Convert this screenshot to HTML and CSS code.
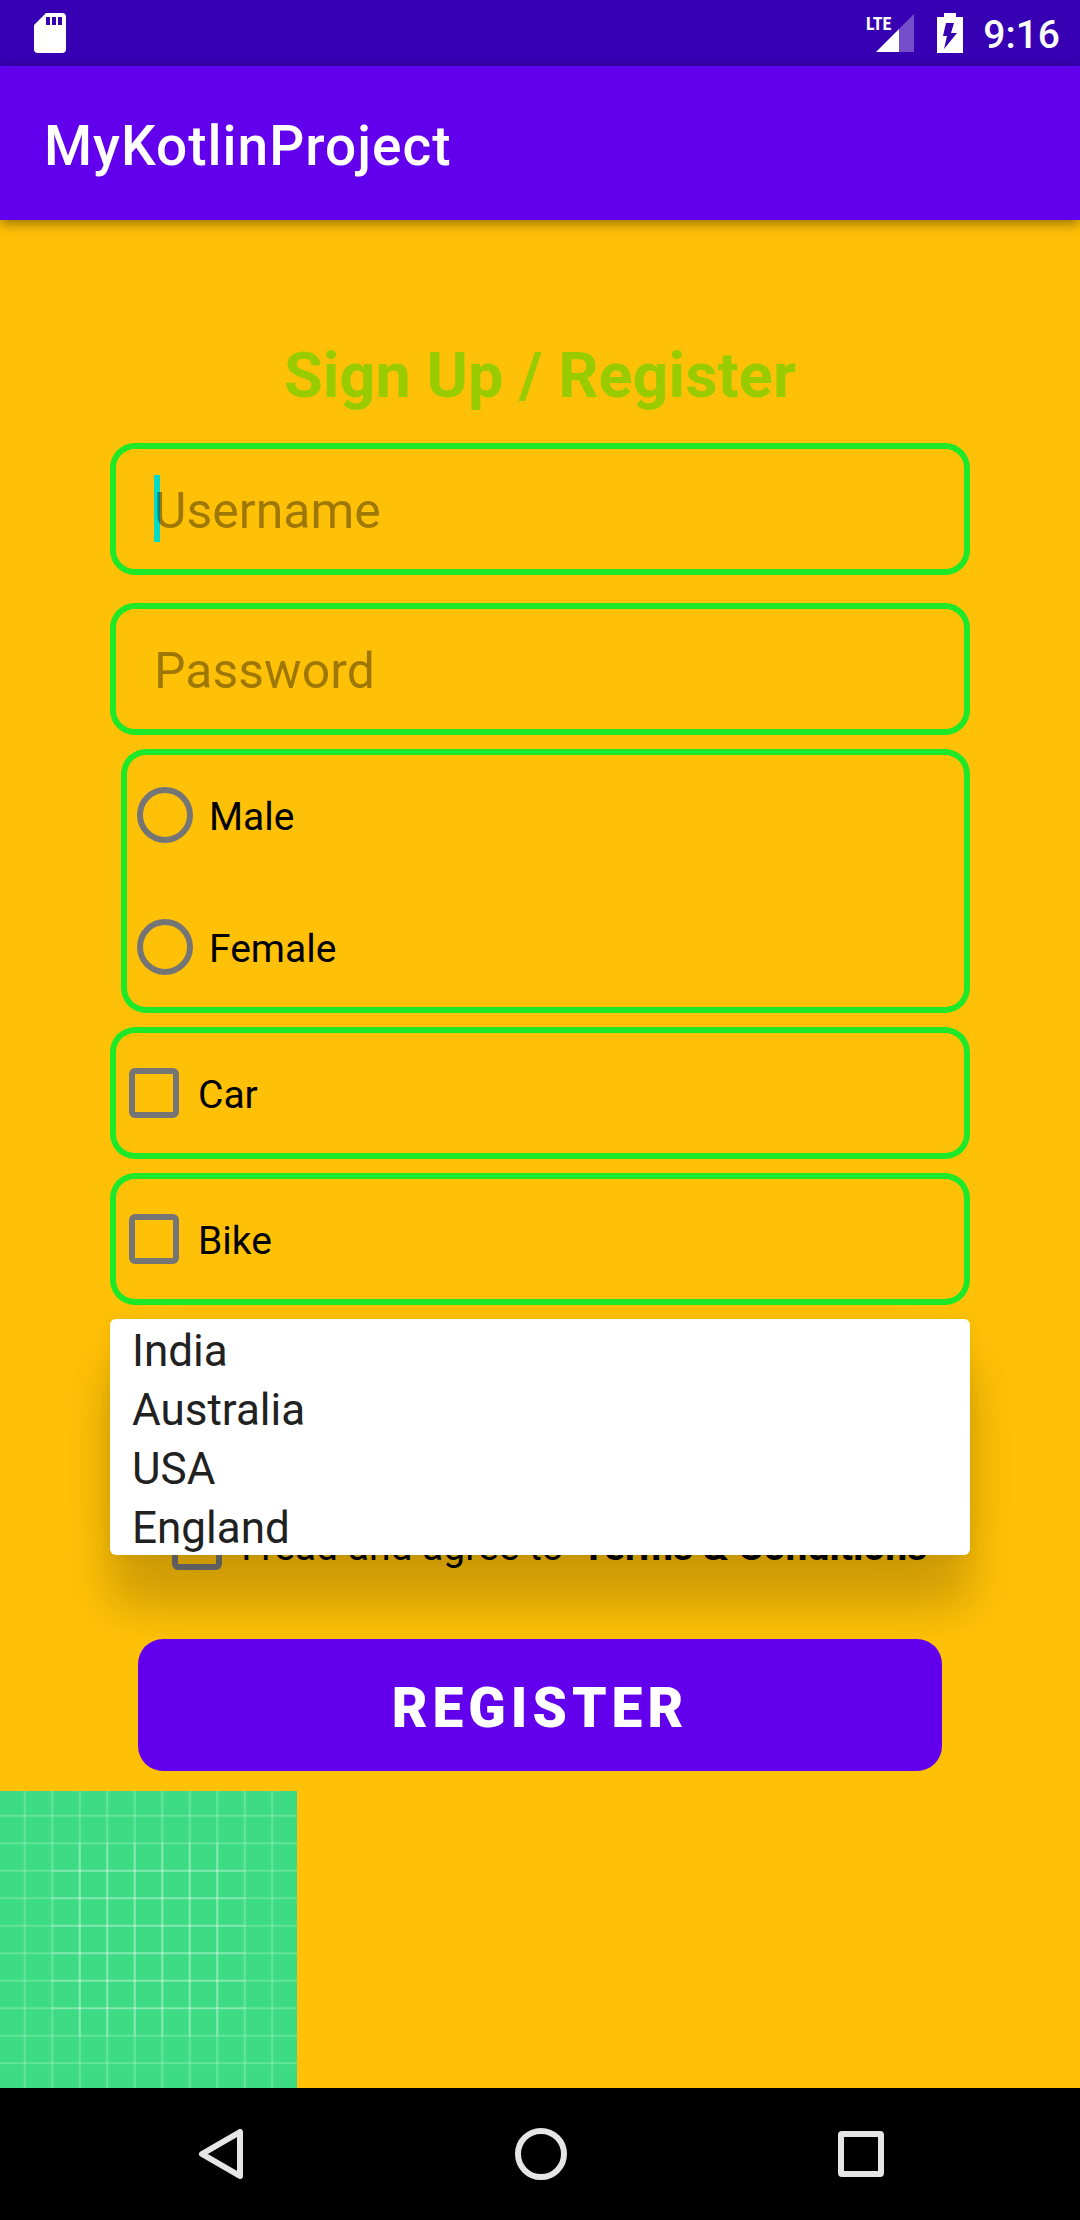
FILE: index.html
```html
<!DOCTYPE html>
<html lang="en">
<head>
<meta charset="utf-8">
<meta name="viewport" content="width=device-width, initial-scale=1">
<title>MyKotlinProject</title>
<link rel="stylesheet" href="styles.css">
</head>
<body>
<div class="status-bar">
  <svg class="status-icon" width="32" height="40" viewBox="0 0 32 40" aria-label="SD card">
    <path fill="#fff" fill-rule="evenodd" d="M12 0H28Q32 0 32 4V36Q32 40 28 40H4Q0 40 0 36V12ZM12 4V12H16V4ZM18 4V12H22V4ZM24 4V12H28V4Z"/>
  </svg>
  <div class="status-right">
    <svg class="signal" width="50" height="40" viewBox="0 0 50 40" aria-label="Mobile signal">
      <path fill="#fff" fill-opacity=".3" d="M34 16L49 1V39H34Z"/>
      <path fill="#fff" d="M34 16V39H11Z"/>
      <text class="network" x="1" y="17">LTE</text>
    </svg>
    <svg class="battery" width="26" height="40" viewBox="0 0 26 40" aria-label="Battery charging">
      <path fill="#fff" fill-rule="evenodd" d="M7 0H19V4H26V40H0V4H7ZM9 10L6 23H10L7 36L20 20H14L17 10Z"/>
    </svg>
    <span class="clock">9:16</span>
  </div>
</div>

<header class="app-bar"><span class="app-title">MyKotlinProject</span></header>

<main class="screen">
  <form class="form">
    <h1 class="heading">Sign Up / Register</h1>

    <div class="field">
      <span class="caret"></span>
      <input class="input" type="text" placeholder="Username" aria-label="Username">
    </div>
    <div class="field">
      <input class="input" type="password" placeholder="Password" aria-label="Password">
    </div>

    <div class="options">
      <div class="outlined radio-group">
        <label class="choice"><input class="radio" type="radio" name="gender"><span class="choice-text">Male</span></label>
        <label class="choice"><input class="radio" type="radio" name="gender"><span class="choice-text">Female</span></label>
      </div>
      <label class="outlined choice"><input class="check" type="checkbox"><span class="choice-text">Car</span></label>
      <label class="outlined choice"><input class="check" type="checkbox"><span class="choice-text">Bike</span></label>
      <div class="country">
        <select class="menu" size="4" aria-label="Country">
          <option>India</option>
          <option>Australia</option>
          <option>USA</option>
          <option>England</option>
        </select>
      </div>
    </div>

    <label class="choice terms"><input class="check" type="checkbox"><span class="choice-text">I read and agree to <b class="terms-name">Terms &amp; Conditions</b></span></label>
    <button class="register" type="button">REGISTER</button>
  </form>

  <svg class="picture" width="297" height="297" viewBox="0 0 108 108" aria-hidden="true">
    <path fill="#3DDC84" d="M0 0H108V108H0Z"/>
    <g fill="none" stroke="#fff" stroke-opacity=".2" stroke-width=".8">
      <path d="M9 0V108M19 0V108M29 0V108M39 0V108M49 0V108M59 0V108M69 0V108M79 0V108M89 0V108M99 0V108"/>
      <path d="M0 9H108M0 19H108M0 29H108M0 39H108M0 49H108M0 59H108M0 69H108M0 79H108M0 89H108M0 99H108"/>
      <path d="M19 29H89M19 39H89M19 49H89M19 59H89M19 69H89M19 79H89"/>
      <path d="M29 19V89M39 19V89M49 19V89M59 19V89M69 19V89M79 19V89"/>
    </g>
  </svg>
</main>

<nav class="nav-bar">
  <button class="nav-button" type="button" aria-label="Back">
    <svg width="66" height="66" viewBox="0 0 66 66"><path d="M53 11V55L15 33Z"/></svg>
  </button>
  <button class="nav-button" type="button" aria-label="Home">
    <svg width="66" height="66" viewBox="0 0 66 66"><circle cx="34" cy="33" r="23"/></svg>
  </button>
  <button class="nav-button" type="button" aria-label="Recent apps">
    <svg width="66" height="66" viewBox="0 0 66 66"><rect x="14" y="13" width="40" height="40" rx="1"/></svg>
  </button>
</nav>
</body>
</html>
```
FILE: styles.css
```css
* {
  box-sizing: border-box;
}

body {
  margin: 0;
  min-height: 100vh;
  display: flex;
  flex-direction: column;
  background: #ffc107;
  color: #000;
  font-family: Roboto, "Liberation Sans", sans-serif;
}

.status-bar {
  display: flex;
  align-items: center;
  justify-content: space-between;
  height: 66px;
  padding: 0 20px 0 34px;
  background: #3700b3;
}

.status-right {
  display: flex;
  align-items: center;
}

.signal {
  overflow: visible;
}

.network {
  fill: #fff;
  font: bold 18px "Roboto Condensed", "Liberation Sans Narrow", Roboto, sans-serif;
}

.battery {
  margin: 0 20px 0 22px;
}

.clock {
  padding-top: 4px;
  color: #fff;
  font-size: 39px;
  font-weight: 500;
}

.app-bar {
  position: relative;
  display: flex;
  align-items: center;
  height: 154px;
  padding: 6px 44px 0;
  background: #6200ee;
  box-shadow: 0 4px 12px rgba(0, 0, 0, .4);
}

.app-title {
  color: #fff;
  font-size: 55px;
  font-weight: 500;
  letter-spacing: 1px;
}

.screen {
  flex: 1;
}

.form {
  display: flex;
  flex-direction: column;
  gap: 28px;
  padding: 118px 110px 20px;
}

.heading {
  margin: 0;
  padding-top: 1px;
  padding-bottom: 2px;
  color: #9c0;
  font-size: 63px;
  line-height: 74px;
  font-weight: 700;
  text-align: center;
}

.field {
  position: relative;
  display: flex;
  height: 132px;
}

.input {
  position: relative;
  width: 100%;
  margin: 0;
  padding: 4px 38px 0;
  border: 6px solid #1de928;
  border-radius: 25px;
  outline: none;
  background: transparent;
  font: 50px Roboto, "Liberation Sans", sans-serif;
}

.input::placeholder {
  color: rgba(0, 0, 0, .38);
  opacity: 1;
}

.caret {
  position: absolute;
  top: 32px;
  left: 44px;
  width: 6px;
  height: 67px;
  background: #03dac5;
}

.options {
  display: flex;
  flex-direction: column;
  gap: 14px;
  margin-top: -14px;
}

.outlined {
  border-radius: 25px;
  box-shadow: inset 0 0 0 6px #1de928;
}

.radio-group {
  margin-left: 11px;
}

.choice {
  display: flex;
  align-items: center;
  height: 132px;
  padding-left: 19px;
}

.radio-group .choice {
  padding-left: 16px;
}

.check,
.radio {
  appearance: none;
  flex: none;
  margin: 0;
  border: 6px solid #757575;
}

.check {
  width: 50px;
  height: 50px;
  margin-right: 19px;
  border-radius: 6px;
}

.radio {
  width: 56px;
  height: 56px;
  margin-right: 16px;
  border-radius: 50%;
}

.choice-text {
  padding-top: 4px;
  font-size: 39px;
  white-space: nowrap;
}

.country {
  position: relative;
  height: 132px;
}

.menu {
  appearance: none;
  position: absolute;
  top: 0;
  left: 0;
  width: 100%;
  height: 236px;
  margin: 0;
  padding: 0;
  overflow: hidden;
  border: 0;
  border-radius: 6px;
  outline: none;
  background: #fff;
  box-shadow: 0 52px 44px rgba(0, 0, 0, .16), 0 30px 80px rgba(0, 0, 0, .05), 0 2px 16px rgba(0, 0, 0, .06);
  color: #212121;
  font: 44px Roboto, "Liberation Sans", sans-serif;
}

.menu option {
  height: 59px;
  padding: 6px 22px 0;
  line-height: 53px;
}

.terms {
  padding-left: 62px;
}

.terms-name {
  margin-left: 8px;
}

.register {
  position: relative;
  height: 132px;
  margin: 0 28px;
  padding: 6px 0 0;
  border: 0;
  border-radius: 25px;
  background: #6200ee;
  color: #fff;
  font: 900 55px Roboto, "Liberation Sans", sans-serif;
  letter-spacing: 5px;
}

.picture {
  display: block;
}

.nav-bar {
  display: grid;
  grid-template-columns: repeat(3, 1fr);
  align-items: center;
  height: 132px;
  padding: 0 60px;
  background: #000;
}

.nav-button {
  display: flex;
  justify-content: center;
  margin: 0;
  padding: 0;
  border: 0;
  background: transparent;
}

.nav-button path,
.nav-button circle,
.nav-button rect {
  fill: none;
  stroke: #e6e6e6;
  stroke-width: 6;
  stroke-linejoin: round;
}
```
